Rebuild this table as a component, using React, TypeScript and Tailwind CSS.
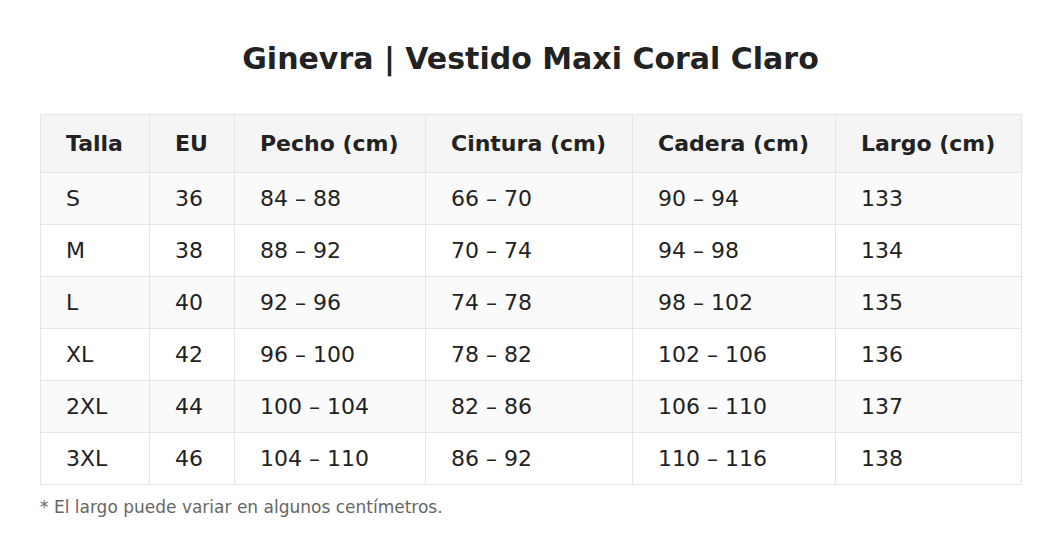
import React from "react";

const rows = [
  ["S", "36", "84 – 88", "66 – 70", "90 – 94", "133"],
  ["M", "38", "88 – 92", "70 – 74", "94 – 98", "134"],
  ["L", "40", "92 – 96", "74 – 78", "98 – 102", "135"],
  ["XL", "42", "96 – 100", "78 – 82", "102 – 106", "136"],
  ["2XL", "44", "100 – 104", "82 – 86", "106 – 110", "137"],
  ["3XL", "46", "104 – 110", "86 – 92", "110 – 116", "138"],
];
const heads = ["Talla", "EU", "Pecho (cm)", "Cintura (cm)", "Cadera (cm)", "Largo (cm)"];
const widths = [109, 85, 191, 207, 203, 186];

export default function App() {
  return (
    <div
      className="w-[1061px] h-[557px] bg-white text-[#222] px-[40px] pt-[40px]"
      style={{ fontFamily: '"DejaVu Sans", sans-serif' }}
    >
      <h1 className="text-center text-[30px] font-bold leading-[38px] m-0">
        Ginevra | Vestido Maxi Coral Claro
      </h1>
      <table className="mt-[36px] border-collapse w-[981px] table-fixed">
        <colgroup>
          {widths.map((w, i) => (
            <col key={i} style={{ width: w }} />
          ))}
        </colgroup>
        <thead>
          <tr className="bg-[#f5f5f5] h-[58px]">
            {heads.map((h) => (
              <th
                key={h}
                className="border border-[#e5e5e5] text-left font-bold text-[22px] leading-[26px] pl-[25px] p-0"
              >
                {h}
              </th>
            ))}
          </tr>
        </thead>
        <tbody>
          {rows.map((r, i) => (
            <tr key={i} className={`h-[52px] ${i % 2 === 0 ? "bg-[#fafafa]" : "bg-white"}`}>
              {r.map((c, j) => (
                <td
                  key={j}
                  className="border border-[#e5e5e5] text-left text-[22px] leading-[26px] pl-[25px] p-0"
                >
                  {c}
                </td>
              ))}
            </tr>
          ))}
        </tbody>
      </table>
      <p className="mt-[11px] text-[17px] leading-[22px] text-[#666]">* El largo puede variar en algunos centímetros.</p>
    </div>
  );
}
